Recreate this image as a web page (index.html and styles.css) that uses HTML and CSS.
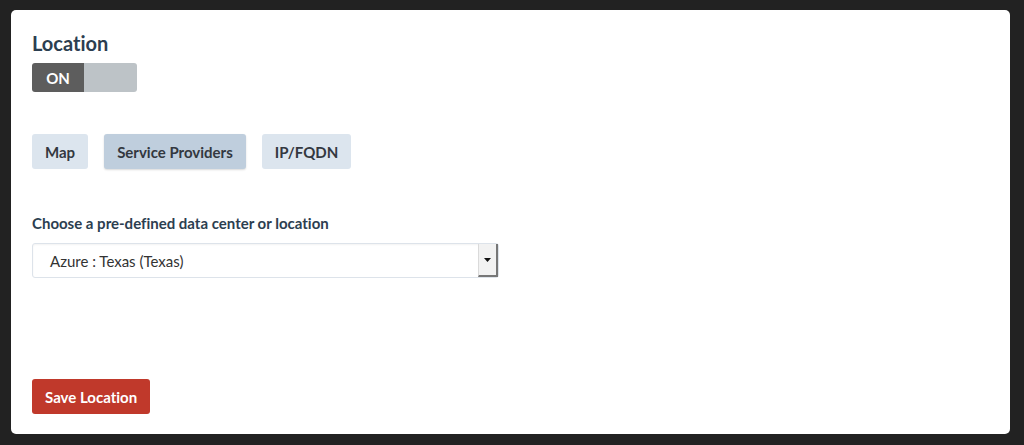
FILE: index.html
```html
<!DOCTYPE html>
<html>
<head>
<meta charset="utf-8">
<link rel="stylesheet" href="styles.css">
</head>
<body>
<div class="card">
  <h2 class="title">Location</h2>
  <div class="toggle"><span class="toggle-on">ON</span><span class="toggle-off"></span></div>
  <div class="tabs">
    <button class="tab">Map</button>
    <button class="tab active">Service Providers</button>
    <button class="tab">IP/FQDN</button>
  </div>
  <label class="label">Choose a pre-defined data center or location</label>
  <div class="select">
    <span class="select-value">Azure : Texas (Texas)</span>
    <span class="select-arrow"><svg width="7" height="4" viewBox="0 0 7 4"><path d="M0 0H7L3.5 4Z" fill="#111"/></svg></span>
  </div>
  <button class="save">Save Location</button>
</div>
</body>
</html>
```
FILE: styles.css
```css
html, body {
  margin: 0;
  padding: 0;
  background: #222222;
  width: 1024px;
  height: 445px;
  overflow: hidden;
}
body {
  padding: 10px 14px 11px 11px;
  box-sizing: border-box;
  font-family: Lato, "Liberation Sans", sans-serif;
  font-variant-ligatures: none;
}
.card {
  background: #ffffff;
  border-radius: 5px;
  height: 424px;
  box-sizing: border-box;
  padding: 20px 21px 0 21px;
  display: flex;
  flex-direction: column;
  align-items: flex-start;
}
.title {
  margin: 0;
  font-size: 20px;
  font-weight: 700;
  color: #2c3e50;
  line-height: 26px;
}
.toggle {
  margin-top: 7px;
  display: flex;
  width: 105px;
  height: 29px;
  border-radius: 3px;
  overflow: hidden;
}
.toggle-on {
  width: 52px;
  background: #5d5d5d;
  color: #fff;
  font-weight: 700;
  font-size: 15px;
  display: flex;
  align-items: center;
  justify-content: center;
}
.toggle-off {
  flex: 1;
  background: #bdc3c7;
}
.tabs {
  margin-top: 42px;
  display: flex;
  gap: 16px;
}
.tab {
  font-family: inherit;
  font-variant-ligatures: none;
  border: 0;
  height: 35px;
  padding: 0 13px;
  border-radius: 3px;
  background: #dce5ee;
  color: #333840;
  font-weight: 700;
  font-size: 15px;
}
.tab.active {
  background: #bfcedd;
  box-shadow: 0 1px 2px rgba(0,0,0,0.15);
}
.label {
  margin-top: 45px;
  font-size: 15px;
  font-weight: 700;
  color: #2c3e50;
  line-height: 18px;
}
.select {
  margin-top: 11px;
  width: 467px;
  height: 35px;
  box-sizing: border-box;
  border: 1px solid #dde3ea;
  border-radius: 3px;
  display: flex;
  align-items: stretch;
  box-shadow: inset 0 1px 2px rgba(0,0,0,0.05);
}
.select-value {
  flex: 1;
  display: flex;
  align-items: center;
  padding-left: 17px;
  font-size: 15px;
  color: #333;
}
.select-arrow {
  width: 17px;
  background: #f2f2f2;
  border-left: 1px solid #dadada;
  border-right: 2px solid #777;
  border-bottom: 2px solid #777;
  display: flex;
  align-items: center;
  justify-content: center;
}
.save {
  margin-top: 101px;
  font-family: inherit;
  font-variant-ligatures: none;
  border: 0;
  height: 35px;
  padding: 0 13px;
  border-radius: 3px;
  background: #c0392b;
  color: #fff;
  font-weight: 700;
  font-size: 15px;
}
```
